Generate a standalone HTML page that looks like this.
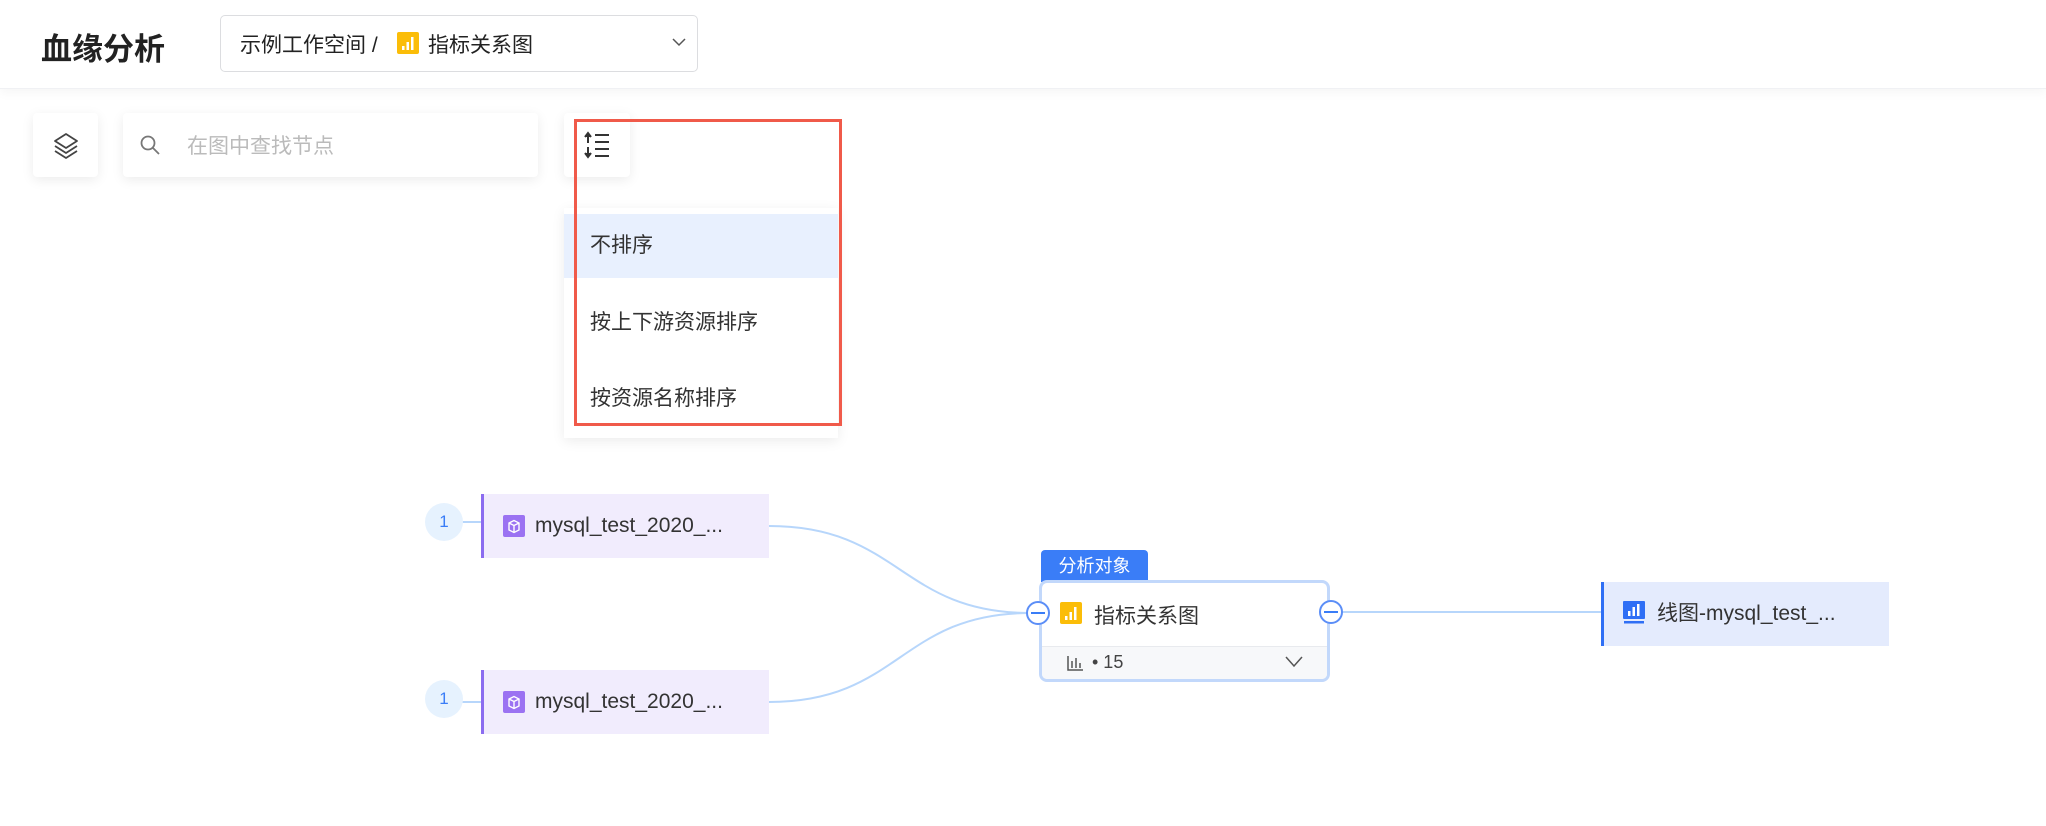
<!DOCTYPE html>
<html><head><meta charset="utf-8"><style>
*{box-sizing:border-box;margin:0;padding:0}
body{width:2046px;height:826px;background:#fff;position:relative;overflow:hidden;font-family:"Liberation Sans","Noto Sans CJK SC",sans-serif;color:#333}
.abs{position:absolute}
.header{left:0;top:0;width:2046px;height:89px;background:#fff;box-shadow:0 4px 10px rgba(0,0,0,0.04);border-bottom:1px solid #f0f1f4}
.card{background:#fff;border-radius:4px;box-shadow:0 3px 12px rgba(0,0,0,0.08)}
.item{position:absolute;left:0;width:274px;height:64px;line-height:64px;padding-left:26px;font-size:21px;color:#333}
.node{height:64px;line-height:64px;font-size:21px;color:#333}
.badge{width:38px;height:38px;border-radius:50%;background:#e6f2fe;color:#3a7df7;font-size:17px;text-align:center;line-height:38px}
.handle{width:24px;height:24px;border-radius:50%;border:2px solid #5b8ef7;background:#fff}
.handle:after{content:"";position:absolute;left:3px;right:3px;top:9px;height:2px;background:#3a7df7}
</style></head><body>
<div class="abs header"></div>
<div class="abs" style="left:41px;top:24px;font-size:31px;font-weight:bold;color:#222">血缘分析</div>
<div class="abs" style="left:220px;top:15px;width:478px;height:57px;border:1px solid #dcdde0;border-radius:5px"></div>
<div class="abs" style="left:240px;top:29px;font-size:21px;color:#222">示例工作空间 /</div>
<svg class="abs" style="left:397px;top:32px" width="22" height="22"><rect width="22" height="22" rx="2" fill="#fbbd08"/><rect x="5" y="14" width="2.5" height="4" fill="#fff"/><rect x="9.5" y="10" width="2.5" height="8" fill="#fff"/><rect x="14" y="5" width="2.5" height="13" fill="#fff"/></svg>
<div class="abs" style="left:428px;top:29px;font-size:21px;color:#222">指标关系图</div>
<svg class="abs" style="left:672px;top:37px" width="14" height="10"><path d="M1 2 L7 8 L13 2" fill="none" stroke="#555" stroke-width="1.5"/></svg>

<div class="abs card" style="left:33px;top:113px;width:65px;height:64px"></div>
<svg class="abs" style="left:51px;top:131px" width="30" height="30" viewBox="0 0 30 30"><g fill="none" stroke="#444" stroke-width="1.8" stroke-linejoin="round"><path d="M15 3 L26 10 L15 17 L4 10 Z"/><path d="M4 15 L15 22 L26 15"/><path d="M4 20 L15 27 L26 20"/></g></svg>
<div class="abs card" style="left:123px;top:113px;width:415px;height:64px"></div>
<svg class="abs" style="left:139px;top:134px" width="22" height="22"><circle cx="9" cy="9" r="6.5" fill="none" stroke="#777" stroke-width="1.8"/><path d="M14 14 L20 20" stroke="#777" stroke-width="1.8"/></svg>
<div class="abs" style="left:187px;top:130px;font-size:21px;color:#bbb">在图中查找节点</div>
<div class="abs card" style="left:564px;top:113px;width:66px;height:64px"></div>
<svg class="abs" style="left:583px;top:131px" width="28" height="28" viewBox="0 0 28 28"><g stroke="#333" stroke-width="2" fill="none"><path d="M5 3 V12"/><path d="M2 6 L5 2 L8 6" fill="#333"/><path d="M5 16 V25"/><path d="M2 22 L5 26 L8 22" fill="#333"/><path d="M12 4 H26 M12 11 H26 M12 18 H26 M12 25 H26"/></g></svg>

<div class="abs card" style="left:564px;top:208px;width:274px;height:230px;border-radius:0">
<div class="item" style="top:6px;background:#e8f0fe">不排序</div>
<div class="item" style="top:83px">按上下游资源排序</div>
<div class="item" style="top:159px">按资源名称排序</div>
</div>
<div class="abs" style="left:574px;top:119px;width:268px;height:307px;border:3px solid #f05a4a"></div>

<svg class="abs" style="left:0;top:0" width="2046" height="826">
<g fill="none" stroke="#b7d6fb" stroke-width="2">
<path d="M769 526 C 900 526, 900 613, 1030 613"/>
<path d="M769 702 C 900 702, 900 613, 1030 613"/>
<path d="M1342 612 H1601"/>
<path d="M462 522 H481 M462 702 H481"/>
</g></svg>

<div class="abs badge" style="left:425px;top:503px">1</div>
<div class="abs node" style="left:481px;top:494px;width:288px;background:#f1ecfd;border-left:3px solid #8b6cf0;padding-left:51px">mysql_test_2020_...</div>
<svg class="abs" style="left:503px;top:515px" width="22" height="22"><rect width="22" height="22" rx="2" fill="#9b72f2"/><path d="M6 8 L11 5.5 L16 8 V15 L11 17.5 L6 15 Z M6 8 L11 10.5 L16 8 M11 10.5 V17.5" fill="none" stroke="#fff" stroke-width="1.4"/></svg>
<div class="abs badge" style="left:425px;top:680px">1</div>
<div class="abs node" style="left:481px;top:670px;width:288px;background:#f1ecfd;border-left:3px solid #8b6cf0;padding-left:51px">mysql_test_2020_...</div>
<svg class="abs" style="left:503px;top:691px" width="22" height="22"><rect width="22" height="22" rx="2" fill="#9b72f2"/><path d="M6 8 L11 5.5 L16 8 V15 L11 17.5 L6 15 Z M6 8 L11 10.5 L16 8 M11 10.5 V17.5" fill="none" stroke="#fff" stroke-width="1.4"/></svg>

<div class="abs" style="left:1041px;top:550px;width:107px;height:32px;background:#3a7df7;color:#fff;font-size:18px;line-height:32px;text-align:center;border-radius:4px 4px 0 0">分析对象</div>
<div class="abs" style="left:1039px;top:580px;width:291px;height:102px;border:3px solid #c2d8fb;border-radius:8px;background:#fff;overflow:hidden">
<div class="abs" style="left:0;top:63px;width:100%;height:40px;background:#f7f8fa;border-top:1px solid #e8eaee"></div>
</div>
<svg class="abs" style="left:1060px;top:602px" width="22" height="22"><rect width="22" height="22" rx="2" fill="#fbbd08"/><rect x="5" y="14" width="2.5" height="4" fill="#fff"/><rect x="9.5" y="10" width="2.5" height="8" fill="#fff"/><rect x="14" y="5" width="2.5" height="13" fill="#fff"/></svg>
<div class="abs" style="left:1094px;top:600px;font-size:21px;color:#333">指标关系图</div>
<svg class="abs" style="left:1066px;top:654px" width="18" height="18"><path d="M2 2 V16 H17 M6 7 V14 M10 4 V14 M14 9 V14" stroke="#555" stroke-width="1.5" fill="none"/></svg>
<div class="abs" style="left:1092px;top:652px;font-size:18px;color:#444">• 15</div>
<svg class="abs" style="left:1285px;top:656px" width="18" height="12"><path d="M1 1 L9 10 L17 1" fill="none" stroke="#555" stroke-width="1.5"/></svg>
<div class="abs handle" style="left:1026px;top:601px"></div>
<div class="abs handle" style="left:1319px;top:600px"></div>

<div class="abs node" style="left:1601px;top:582px;width:288px;background:#e4ebfd;border-left:3px solid #2f6ff5;padding-left:53px">线图-mysql_test_...</div>
<svg class="abs" style="left:1623px;top:601px" width="22" height="24"><rect width="22" height="18" rx="1" fill="#2f6ff5"/><rect x="5" y="10" width="2.5" height="5" fill="#fff"/><rect x="9.5" y="6" width="2.5" height="9" fill="#fff"/><rect x="14" y="3" width="2.5" height="12" fill="#fff"/><rect x="1" y="20" width="20" height="2.5" fill="#2f6ff5"/></svg>
</body></html>
